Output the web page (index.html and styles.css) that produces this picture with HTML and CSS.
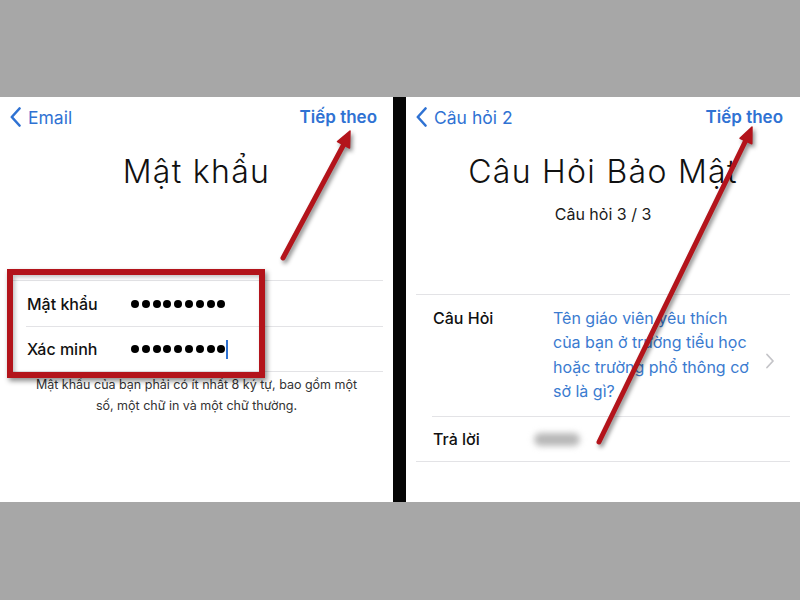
FILE: index.html
```html
<!DOCTYPE html>
<html lang="vi">
<head>
<meta charset="utf-8">
<title>Mật khẩu</title>
<link rel="stylesheet" href="styles.css">
</head>
<body>
<div class="page">
  <div class="band"></div>
  <div class="panels">
    <section class="panel left">
      <div class="nav">
        <div class="back">
          <svg class="chev" width="11" height="20" viewBox="0 0 11 20"><path d="M9.5 1.5 L1.8 10 L9.5 18.5" fill="none" stroke="#2f72d3" stroke-width="2.6" stroke-linecap="round" stroke-linejoin="round"/></svg>
          <span>Email</span>
        </div>
        <div class="next">Tiếp theo</div>
      </div>
      <h1 class="title">Mật khẩu</h1>
      <div class="form">
        <div class="rows">
          <div class="row short">
            <span class="label lw1">Mật khẩu</span>
            <span class="dots"><i></i><i></i><i></i><i></i><i></i><i></i><i></i><i></i><i></i></span>
          </div>
          <div class="row short">
            <span class="label lw1">Xác minh</span>
            <span class="dots"><i></i><i></i><i></i><i></i><i></i><i></i><i></i><i></i><i></i><b class="caret"></b></span>
          </div>
        </div>
      </div>
      <p class="help">Mật khẩu của bạn phải có ít nhất 8 ký tự, bao gồm một<br>số, một chữ in và một chữ thường.</p>
      <div class="redbox"></div>
    </section>
    <div class="divider"></div>
    <section class="panel right">
      <div class="nav">
        <div class="back">
          <svg class="chev" width="11" height="20" viewBox="0 0 11 20"><path d="M9.5 1.5 L1.8 10 L9.5 18.5" fill="none" stroke="#2f72d3" stroke-width="2.6" stroke-linecap="round" stroke-linejoin="round"/></svg>
          <span>Câu hỏi 2</span>
        </div>
        <div class="next">Tiếp theo</div>
      </div>
      <h1 class="title">Câu Hỏi Bảo Mật</h1>
      <div class="subtitle">Câu hỏi 3 / 3</div>
      <div class="form form2">
        <div class="rows">
          <div class="row tall">
            <span class="label lw2">Câu Hỏi</span>
            <span class="question">Tên giáo viên yêu thích<br>của bạn ở trường tiểu học<br>hoặc trường phổ thông cơ<br>sở là gì?</span>
            <svg class="more" width="10" height="16" viewBox="0 0 10 16"><path d="M2 1.5 L8 8 L2 14.5" fill="none" stroke="#c4c4c8" stroke-width="1.8" stroke-linecap="round" stroke-linejoin="round"/></svg>
          </div>
          <div class="row short">
            <span class="label lw3">Trả lời</span>
            <span class="blur"></span>
          </div>
        </div>
      </div>
    </section>
  </div>
  <div class="band bottom"></div>
  <svg class="arrows" width="800" height="600" viewBox="0 0 800 600">
    <g class="arrow">
      <line x1="283" y1="258" x2="344" y2="144" />
      <polygon points="350,131 349.5,148 337.5,141.5" />
    </g>
    <g class="arrow">
      <line x1="599" y1="442" x2="746" y2="140" />
      <polygon points="752,127 751.8,143.8 740,138.2" />
    </g>
  </svg>
</div>
</body>
</html>
```

FILE: styles.css
```css
* { box-sizing: border-box; }
html, body { margin: 0; padding: 0; }
body {
  width: 800px;
  height: 600px;
  background: #a7a7a7;
  font-family: "Inter", "Noto Sans", "Liberation Sans", sans-serif;
  color: #111;
  overflow: hidden;
}
.page {
  position: relative;
  width: 800px;
  height: 600px;
  display: flex;
  flex-direction: column;
}
.band { height: 97px; background: #a7a7a7; }
.band.bottom { height: 98px; }
.panels {
  display: flex;
  height: 405px;
}
.panel {
  position: relative;
  background: #fff;
  display: flex;
  flex-direction: column;
}
.panel.left { width: 393px; }
.panel.right { width: 394px; }
.divider { width: 13px; background: #050505; }

.nav {
  height: 40px;
  display: flex;
  align-items: center;
  justify-content: space-between;
  padding: 0 16px 0 10px;
  font-size: 17.5px;
  color: #2f72d3;
}
.right .nav { padding-right: 17px; }
.back { display: flex; align-items: center; gap: 7px; }
.chev { display: block; }
.next { font-weight: 600; font-size: 17px; }

.title {
  margin: 16px 0 0;
  font-size: 32px;
  line-height: 38px;
  font-weight: 300;
  text-align: center;
  color: #111;
  letter-spacing: 1.3px;
}
.subtitle {
  margin-top: 13px;
  font-size: 16px;
  line-height: 20px;
  text-align: center;
  color: #1a1a1a;
}

.form {
  margin: 89px 10px 0;
  border-top: 1px solid #e3e3e6;
  border-bottom: 1px solid #e3e3e6;
}
.form2 { margin-top: 70px; }
.rows { margin-left: 16px; }
.row {
  display: flex;
  align-items: center;
}
.row + .row { border-top: 1px solid #e3e3e6; }
.row.short { height: 45px; }
.row.tall {
  height: 121px;
  align-items: flex-start;
  padding-top: 11px;
}
.label {
  font-size: 16px;
  font-weight: 500;
  padding-left: 1px;
  line-height: 24px;
  color: #111;
  flex: none;
}
.lw1 { width: 105px; }
.lw2 { width: 121px; }
.lw3 { width: 100px; }

.dots { display: flex; align-items: center; gap: 2.8px; }
.dots i {
  display: block;
  width: 8px;
  height: 8px;
  border-radius: 50%;
  background: #000;
}
.caret {
  display: block;
  width: 2px;
  height: 19px;
  background: #2f72d3;
  margin-left: -1.8px;
}

.help {
  margin: 2px 0 0;
  font-size: 12.5px;
  line-height: 21px;
  text-align: center;
  color: #333;
}

.question {
  flex: 1;
  font-size: 16px;
  line-height: 24.3px;
  color: #3a7bd0;
}
.more {
  align-self: center;
  margin: 0 15px 0 0;
  flex: none;
}
.blur {
  display: block;
  width: 46px;
  height: 13px;
  margin-left: 2px;
  border-radius: 7px;
  background: #b8b8b8;
  filter: blur(3px);
}

.redbox {
  position: absolute;
  left: 7px;
  top: 172px;
  width: 258px;
  height: 109px;
  border: 6px solid #b3141b;
  box-shadow: 2px 3px 5px rgba(0,0,0,0.45), inset 2px 2px 4px rgba(0,0,0,0.25);
}

.arrows {
  position: absolute;
  left: 0;
  top: 0;
  pointer-events: none;
}
.arrow {
  filter: drop-shadow(2px 3px 2px rgba(0,0,0,0.45));
}
.arrow line {
  stroke: #b3141b;
  stroke-width: 5;
  stroke-linecap: round;
}
.arrow polygon {
  fill: #b3141b;
  stroke: #b3141b;
  stroke-width: 1.5;
  stroke-linejoin: round;
}
```
